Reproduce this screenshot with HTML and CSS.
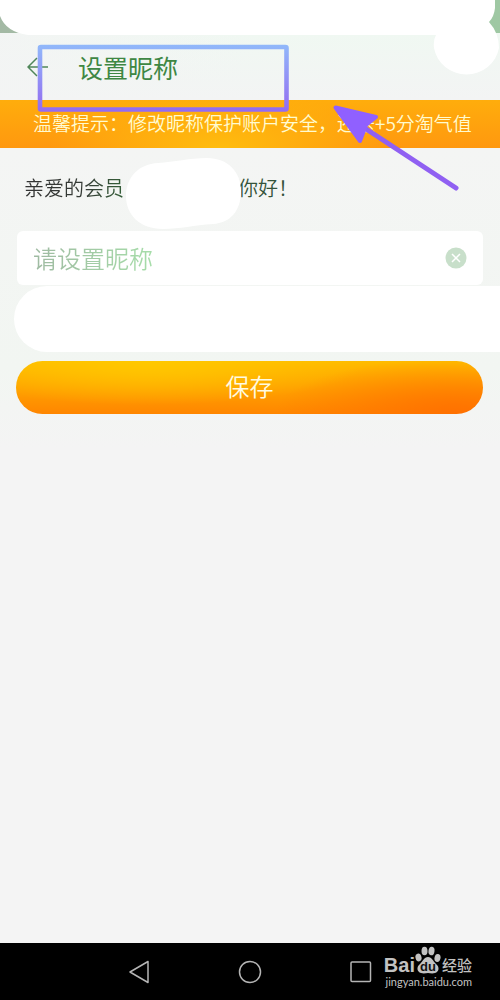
FILE: index.html
```html
<!DOCTYPE html>
<html lang="zh-CN">
<head>
<meta charset="utf-8">
<meta name="viewport" content="width=device-width, initial-scale=1">
<title>设置昵称</title>
<link rel="stylesheet" href="styles.css">
</head>
<body>
<div class="screen">
  <div class="status"></div>
  <header class="header">
    <button class="back" type="button" aria-label="返回">
      <svg width="22" height="20" viewBox="0 0 22 20"><path d="M21 10H1M10 1L1 10l9 9"/></svg>
    </button>
    <h1 class="title">设置昵称</h1>
  </header>
  <p class="notice">温馨提示：修改昵称保护账户安全，还送+5分淘气值</p>
  <main class="content">
    <p class="greeting"><span class="member">亲爱的会员</span><span class="hello">你好！</span></p>
    <form class="form">
      <div class="field">
        <input class="nickname" type="text" placeholder="请设置昵称" aria-label="昵称">
        <button class="clear" type="button" aria-label="清除">
          <svg width="22" height="22" viewBox="0 0 22 22"><circle cx="11" cy="11" r="10.5"/><path d="M7 7l8 8M15 7l-8 8"/></svg>
        </button>
      </div>
      <div class="masked"></div>
      <button class="save" type="submit">保存</button>
    </form>
  </main>
  <nav class="navbar">
    <button class="key" type="button" aria-label="后退"><svg width="24" height="26" viewBox="0 0 24 26"><path d="M21 2.500v21L3 13z"/></svg></button>
    <button class="key" type="button" aria-label="主页"><svg width="24" height="26" viewBox="0 0 24 26"><circle cx="12" cy="13" r="10.500"/></svg></button>
    <button class="key" type="button" aria-label="最近"><svg width="24" height="26" viewBox="0 0 24 26"><rect x="2" y="3" width="19.500" height="19.500" rx="1"/></svg></button>
  </nav>
  <div class="watermark">
    <div class="brand">
      <span class="bai">Bai</span>
      <span class="paw">
        <svg width="26" height="28" viewBox="0 0 26 28"><ellipse cx="3.500" cy="11.500" rx="3" ry="4" transform="rotate(-15 3.500 11.500)"/><ellipse cx="9.500" cy="5" rx="3" ry="4.300"/><ellipse cx="16.500" cy="5" rx="3" ry="4.300" transform="rotate(8 16.500 5)"/><ellipse cx="22.500" cy="12" rx="3" ry="4" transform="rotate(12 22.500 12)"/><path d="M13 11c4 0 5 4 8 7 4 3 3 8-1 9-3 1-5 0-7 0s-4 1-7 0c-4-1-5-6-1-9 3-3 4-7 8-7z"/></svg>
        <span class="du">du</span>
      </span>
      <span class="exp">经验</span>
    </div>
    <div class="site">jingyan.baidu.com</div>
  </div>
  <svg class="marks" width="500" height="360" viewBox="0 0 500 360" aria-hidden="true">
    <defs>
      <linearGradient id="frame" gradientUnits="userSpaceOnUse" x1="0" y1="45" x2="0" y2="111"><stop offset="0" stop-color="#91b8fa"/><stop offset="1" stop-color="#936bf1"/></linearGradient>
    </defs>
    <path class="blank" d="M0 0H495V8Q494 17 489 22Q499 33 499 48A33 32 0 0 1 434 48Q433 40 436 35H28Q6 32 0 16z"/>
    <path class="blank" d="M158 163C174 162 190 158 207 158C228 158 241 172 241 191C241 211 230 223 213 224C194 225 180 229 163 229C140 229 126 215 126 196C126 177 139 164 158 163z"/>
    <rect x="40" y="47" width="246.500" height="62.500" rx="1" fill="none" stroke="url(#frame)" stroke-width="4.600"/>
    <path class="arrow" d="M456 188L360 125"/>
    <path class="head" d="M335.500 107.500L376 117L366 125L360 141z"/>
  </svg>
</div>
</body>
</html>
```
FILE: styles.css
```css
* { box-sizing: border-box; }
body {
  margin: 0;
  background: #f4f4f4;
  font-family: "Noto Sans CJK SC", sans-serif;
  font-weight: 350;
}
button { margin: 0; padding: 0; border: 0; background: none; font-family: inherit; }
svg { display: block; }
h1, p { margin: 0; }
.screen {
  position: relative;
  display: flex;
  flex-direction: column;
  min-height: 100vh;
  overflow: hidden;
}
.status { height: 33px; background: linear-gradient(90deg, #a3b9a4, #9fc8a3); }
.header {
  display: flex;
  align-items: center;
  gap: 29px;
  height: 67px;
  padding: 0 27px;
  background: linear-gradient(90deg, #f3f4f4cc, #f3f4f400 50%), linear-gradient(#f0f8f2, #f3f4f4);
}
.back path { fill: none; stroke: #50875a; stroke-width: 1.5; }
.title {
  font-size: 25px;
  line-height: 36px;
  font-weight: 400;
  color: #3e8743;
}
.notice {
  height: 48px;
  padding-left: 33px;
  background: radial-gradient(ellipse 170px 56px at 44% 100%, #ffbd0e, #ffbd0e00), linear-gradient(#ffad0c, #ff980f);
  color: #fffbd0;
  font-size: 19px;
  line-height: 46px;
  white-space: nowrap;
}
.content {
  flex: 1;
  background: linear-gradient(#f4f5f4, #f2f6f2 220px, #f4f4f4 300px);
}
.greeting {
  display: flex;
  gap: 114px;
  padding: 24px 24px 28px;
  font-size: 20px;
  line-height: 31px;
  white-space: nowrap;
}
.member {
  background: linear-gradient(90deg, #333, #353b36 60%, #356039);
  background-clip: text;
  color: transparent;
}
.hello { color: #34533a; }
.form { display: flex; flex-direction: column; }
.field {
  display: flex;
  align-items: center;
  height: 54px;
  margin: 0 17px;
  padding: 0 16px;
  border-radius: 6px;
  background: #fff;
}
.nickname {
  flex: 1;
  min-width: 0;
  height: 42px;
  padding: 0 0 2px;
  border: 0;
  outline: 0;
  background: none;
  font-family: inherit;
  font-size: 24px;
  font-weight: 350;
}
.nickname::placeholder {
  background: linear-gradient(90deg, #9fbaa2, #a6dda9 120px);
  background-clip: text;
  color: transparent;
  opacity: 1;
}
.clear circle { fill: #c8dfca; }
.clear path { stroke: #fff; stroke-width: 1.5; }
.masked {
  height: 66px;
  margin: 1px 0 9px 14px;
  border-radius: 33px 0 0 33px;
  background: #fff;
}
.save {
  height: 53px;
  margin: 0 17px 0 16px;
  padding-bottom: 3px;
  border-radius: 27px;
  background:
    radial-gradient(ellipse 220px 44px at 28% 0, #ffc800, #ffc80000),
    radial-gradient(ellipse 180px 56px at 94% 100%, #ff7100, #ff710000),
    linear-gradient(#ffbc00, #ff8600);
  color: #fffbe2;
  font-size: 24px;
  font-weight: 350;
  line-height: 50px;
}
.navbar {
  display: flex;
  justify-content: center;
  align-items: center;
  gap: 87px;
  height: 57px;
  background: #000;
}
.key path, .key circle, .key rect { fill: none; stroke: #b5b5b5; stroke-width: 1.5; stroke-linejoin: round; }
.watermark {
  position: absolute;
  right: 28px;
  bottom: 11px;
  color: #c2c2c2;
}
.brand { display: flex; align-items: flex-end; height: 30px; }
.bai { font: 700 20px/20px "Liberation Sans", sans-serif; }
.paw { position: relative; margin-bottom: 1px; }
.paw svg { fill: #c2c2c2; }
.du {
  position: absolute;
  left: 0;
  right: 0;
  bottom: 0;
  color: #111;
  font: 700 13px/15px "Liberation Sans", sans-serif;
  text-align: center;
}
.exp { margin-left: 1px; font-size: 15px; font-weight: 500; line-height: 20px; }
.site { font: 11px/14px Lato, "Noto Sans", sans-serif; text-align: right; }
.marks { position: absolute; top: 0; left: 0; pointer-events: none; }
.blank { fill: #fff; }
.arrow { stroke: #9060f2; stroke-width: 5; stroke-linecap: round; }
.head { fill: #9060ff; stroke: #9060ff; stroke-width: 4; stroke-linejoin: round; }
```
